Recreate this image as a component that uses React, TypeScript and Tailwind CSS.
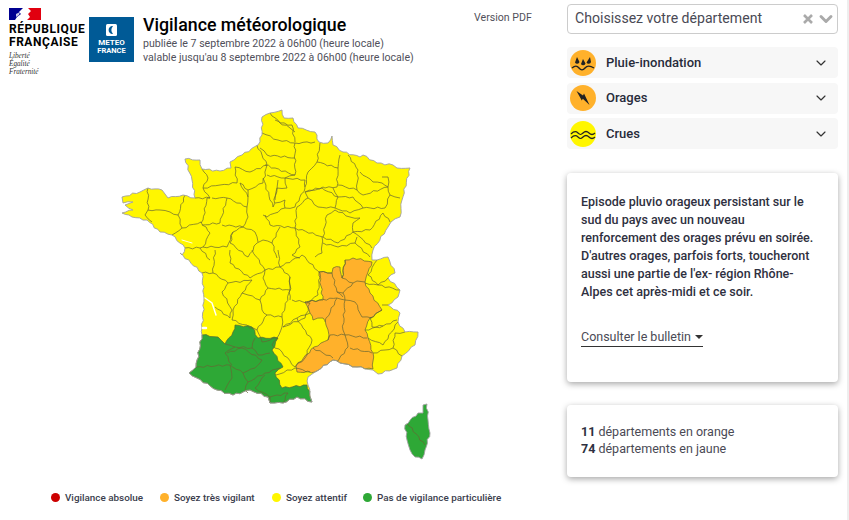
import { ChevronDown } from 'lucide-react';

const yellow = '#fff600';
const orange = '#ffb12b';
const green = '#2ea836';

// page-pixel coordinates, the svg viewBox keeps them as they are
const franceOutline =
  '185,159 200,160 202,169 220,171 231,168 230,162 242,155 258,145 262,135 262,117 270,113 282,110 284,118 293,118 298,128 315,132 319,142 328,143 332,136 333,145 343,152 360,157 363,155 377,163 393,165 397,168 410,168 402,200 400,217 391,222 388,227 373,250 372,260 377,260 388,257 395,273 388,278 400,290 398,297 388,305 400,313 398,322 405,332 418,332 415,345 402,356 397,368 378,374 373,370 357,367 340,363 333,360 315,372 308,377 308,385 312,402 297,397 283,403 270,403 268,397 250,390 233,395 217,390 197,378 189,373 196,367 202,335 202,328 204,298 202,273 180,253 182,255 185,248 172,235 160,232 147,220 132,217 122,213 133,210 125,205 133,202 123,203 122,197 140,192 148,188 162,190 168,198 183,195 195,198 192,180';

const orangeZone =
  '342,278 345,260 353,258 372,262 368,272 365,282 370,293 382,310 370,318 365,330 368,338 373,353 373,369 357,367 340,363 333,360 315,372 297,372 296,366 314,347 328,340 329,335 326,325 323,318 313,320 310,313 305,302 323,300 319,272 332,273 333,268 340,267';

const greenZone =
  '202,335 218,337 225,344 233,332 235,325 252,327 258,338 278,338 272,350 283,367 275,373 282,388 307,385 312,402 297,397 283,403 270,403 268,397 250,390 233,395 217,390 197,378 189,373 196,367';

const corsica =
  '423,405 427,404 428,420 430,433 425,450 422,459 415,457 410,450 407,440 405,425 418,413 423,413';

const borders = [
  // Bretagne, Normandie, Pays de la Loire
  '148,188 148,210 160,210 170,212 178,215 185,195',
  '148,210 145,215 152,222',
  '195,198 210,198 207,198 203,220 201,223',
  '178,215 182,228 172,235',
  '182,228 201,222 210,233 203,247 200,248 185,248',
  '200,248 210,260',
  '210,198 203,188 208,178 202,169',
  '203,188 220,185 237,183 235,167',
  '212,198 227,198 247,207 248,197 240,183',
  '227,198 220,223 202,225',
  '247,207 248,217 243,227 222,225',
  '203,247 227,247 233,232 243,227',
  '233,232 230,243 248,257 257,243 263,240',
  '243,227 255,232 258,242',
  '235,167 250,172 267,165 257,145',
  '240,183 248,190 263,183 267,165',
  '248,190 248,197',
  // Nord, Ile-de-France
  '262,133 278,140 295,143 315,142',
  '270,113 280,123 292,125 295,142',
  '275,120 290,128 295,132',
  '260,148 267,155 295,158',
  '295,143 295,175',
  '320,143 317,162 308,172 305,187',
  '265,165 295,175 285,178',
  '267,175 285,178 287,188 277,188 273,207',
  '263,178 273,207',
  '278,180 277,188 275,200',
  '285,178 305,180 305,188 295,207 285,208 285,200 275,203',
  '263,215 267,217 285,208',
  // Grand Est, Bourgogne, Franche-Comte
  '317,162 338,168 337,187 325,188 323,187 305,192',
  '340,155 338,168',
  '348,155 358,170 357,190 338,185',
  '357,190 363,195 388,187',
  '360,172 373,182 382,183 388,187',
  '382,177 388,177 388,187',
  '388,187 390,195 385,208',
  '390,195 400,198',
  '353,197 363,208 385,208',
  '333,188 338,197 335,208 350,213 363,208',
  '338,197 353,197',
  '305,192 322,188 338,197',
  '305,192 308,198 297,207',
  '308,198 318,207 335,208',
  '335,210 350,217 360,218 353,223 353,232 338,243 323,237 327,215 335,210',
  '353,232 370,230 383,213 390,222',
  '353,232 360,237 372,248',
  '297,207 295,228 323,237',
  // Centre
  '265,215 270,225 295,228',
  '280,227 272,243 277,258',
  '295,228 300,247 292,255 300,258',
  '322,237 322,253 315,257',
  '323,243 338,247 355,243 357,237',
  '355,243 370,257',
  '263,240 272,243',
  // Poitou, Limousin, Auvergne
  '215,250 213,273 202,273',
  '213,273 228,283 222,292 232,310 230,318 215,307',
  '230,250 230,263 250,278 265,270 252,250',
  '265,270 263,278 268,288 290,290 290,277 280,267 265,270',
  '278,250 280,267 302,255 320,273',
  '228,283 252,280',
  '252,280 242,293 233,310',
  '242,293 248,295 260,300 262,310 267,315 257,330 232,320 233,310',
  '268,288 260,300',
  '267,315 282,317 282,327 277,338 262,342 257,330',
  '290,290 282,317',
  '283,327 305,318 310,303 292,300',
  '290,277 290,300',
  '307,302 318,295 320,273',
  '283,327 297,318 303,328 312,340 305,358 295,367 282,352 272,345 278,338',
  '276,375 295,368 310,372',
  '297,318 310,313',
  // Sud-Ouest
  '196,367 230,365 232,378 225,390',
  '225,344 235,347 252,348 255,338',
  '235,347 225,353 232,365',
  '227,353 242,348 262,360 255,368 243,373 230,365',
  '252,348 258,355 270,353',
  '243,373 248,382 245,390 248,393',
  '248,382 265,373 280,368',
  '265,375 255,388 270,397 270,403',
  '270,397 288,393 283,403',
  // Rhone-Alpes
  '319,272 332,273 337,292 343,297',
  '342,278 353,283 343,293 337,292',
  '345,260 342,278',
  '353,283 357,281 365,282',
  '343,293 345,300 343,330 345,335',
  '345,300 355,302 362,317 372,318',
  '305,302 337,298 345,300',
  '337,298 325,322',
  '330,335 345,335 348,347 337,362',
  '345,335 367,338',
  '350,348 372,353',
  '313,348 333,358',
  '328,340 330,335',
  // Alpes, Provence
  '377,260 368,275 378,285 388,278',
  '365,283 378,285 400,290',
  '382,305 388,305',
  '382,310 370,318 372,327 383,326 397,320',
  '365,330 383,326',
  '368,338 383,345 398,322',
  '373,353 393,348 402,356',
  '395,333 405,332',
  '393,348 395,333',
  // Corse
  '407,423 425,445',
];

// breaks each straight segment into small wiggles, same offset for the same
// segment in both directions so that fills and borders stay aligned
function roughen(points: string, closed = false) {
  const pts = points.split(' ').map((p) => p.split(',').map(Number));
  if (closed) pts.push(pts[0]);
  const out: string[] = [];
  for (let i = 0; i < pts.length - 1; i++) {
    const [ax, ay] = pts[i];
    const [bx, by] = pts[i + 1];
    out.push(`${ax},${ay}`);
    const len = Math.hypot(bx - ax, by - ay);
    const steps = Math.floor(len / 3.5);
    const seed = ax + bx + (ay + by) * 7;
    const flip = ax < bx || (ax === bx && ay < by) ? 1 : -1;
    for (let s = 1; s < steps; s++) {
      const t = flip === 1 ? s / steps : 1 - s / steps;
      const k = flip === 1 ? s : steps - s;
      const off = Math.sin(seed * 1.7 + k * 2.3) * 0.9;
      const nx = -(by - ay) / len;
      const ny = (bx - ax) / len;
      const u = flip === 1 ? t : 1 - t;
      out.push(`${(ax + (bx - ax) * u + nx * off * flip).toFixed(1)},${(ay + (by - ay) * u + ny * off * flip).toFixed(1)}`);
    }
  }
  const last = pts[pts.length - 1];
  out.push(`${last[0]},${last[1]}`);
  return out.join(' ');
}

const legend = [
  { label: 'Vigilance absolue', color: 'bg-[#cc0000]', width: 'w-[109px]' },
  { label: 'Soyez très vigilant', color: 'bg-[#ffb12b]', width: 'w-[112px]' },
  { label: 'Soyez attentif', color: 'bg-[#fff600]', width: 'w-[91px]' },
  { label: 'Pas de vigilance particulière', color: 'bg-[#2ea836]', width: 'w-[140px]' },
];

function RainIcon() {
  return (
    <svg width="26" height="26" viewBox="0 0 26 26">
      <circle cx="13" cy="13" r="13" fill={orange} />
      <path d="M7 7 L9.5 12 A2.5 2.5 0 0 1 5 12.5 Z M13 9 L15.5 13.5 A2.4 2.4 0 0 1 11 14 Z M20 7 L21 12 A2.4 2.4 0 0 1 16.5 12.5 Z" fill="#222" />
      <path d="M2 18 C5 15.5 7 15.5 9 18 C11 20.5 13 20.5 15 18 C17 15.5 20 15.5 24 18" fill="none" stroke="#222" strokeWidth="1.4" />
    </svg>
  );
}

function StormIcon() {
  return (
    <svg width="26" height="26" viewBox="0 0 26 26">
      <circle cx="13" cy="13" r="13" fill={orange} />
      <path d="M6.5 6 L13 10.5 L14 8.5 L19.5 20 L12.8 13.8 L11.8 15.6 Z" fill="#222" />
    </svg>
  );
}

function FloodIcon() {
  return (
    <svg width="26" height="26" viewBox="0 0 26 26">
      <circle cx="13" cy="13" r="13" fill={yellow} />
      <path
        d="M1 13 C4 10 6 10 8 12 C10 14 11 14 13 12 C15 10 17 10 19 12 C21 14 23 14 25 12 M1 17 C4 14 6 14 8 16 C10 18 11 18 13 16 C15 14 17 14 19 16 C21 18 23 18 25 16"
        fill="none"
        stroke="#222"
        strokeWidth="1.2"
      />
    </svg>
  );
}

function Flag() {
  return (
    <svg width="32" height="12" viewBox="0 0 32 12">
      <rect width="32" height="12" fill="#fff" />
      <path d="M0 0 H14 L10 4 L12 6 L8 9 L6 12 H0 Z" fill="#000091" />
      <path d="M19 0 H32 V12 H18 L21 9 L19 6 L22 3 Z" fill="#e1000f" />
      <path d="M7 6 L11 4 L10 7 L7 9 Z" fill="#c8c8e8" />
    </svg>
  );
}

function MeteoLogo() {
  return (
    <div className="w-[45px] h-[45px] bg-[#005a96] flex flex-col items-center justify-center shrink-0">
      <svg width="11" height="12" viewBox="0 0 11 12" className="mb-[3px]">
        <rect width="11" height="12" rx="1.5" fill="#fff" />
        <path d="M7 2.2 A3.6 3.9 0 1 0 7 9.8 A5.2 5.2 0 0 1 7 2.2 Z" fill="#005a96" />
      </svg>
      <span className="text-[8px] leading-[8px] font-bold text-white">METEO</span>
      <span className="text-[7.5px] leading-[8px] font-bold text-white">FRANCE</span>
    </div>
  );
}

function RiskRow({ icon, label }: { icon: React.ReactNode; label: string }) {
  return (
    <div className="h-[31px] rounded bg-[#f7f7f7] flex items-center pl-[3px] pr-[9px]">
      {icon}
      <span className="ml-[10px] flex-1 text-[13px] font-medium text-[#272b3a]">{label}</span>
      <ChevronDown size={16} strokeWidth={1.75} className="text-[#333]" />
    </div>
  );
}

export default function App() {
  return (
    <div
      className="w-[849px] h-[520px] overflow-hidden bg-white flex border-r-2 border-[#eeeeee]"
      style={{ fontFamily: 'Roboto, sans-serif' }}
    >
      {/* Colonne carte */}
      <div className="w-[567px] shrink-0 flex flex-col">
        <header className="h-[90px] shrink-0 flex items-start pl-[9px] pt-[8px]">
          <div className="w-[80px] shrink-0 flex flex-col">
            <Flag />
            <div className="mt-[3px] text-[12px] leading-[13px] font-bold text-black tracking-[0.55px]">
              RÉPUBLIQUE
              <br />
              FRANÇAISE
            </div>
            <div
              className="mt-[3px] text-[7.2px] leading-[8px] italic text-[#333]"
              style={{ fontFamily: '"Liberation Serif", serif' }}
            >
              Liberté
              <br />
              Égalité
              <br />
              Fraternité
            </div>
          </div>
          <div className="mt-[9px]">
            <MeteoLogo />
          </div>
          <div className="ml-[9px] pt-[6px] flex-1 relative">
            <h1 className="text-[17.8px] leading-[21px] font-medium text-black">Vigilance météorologique</h1>
            <p className="mt-[2px] text-[10.6px] leading-[14px] text-[#50505a]">
              publiée le 7 septembre 2022 à 06h00 (heure locale)
            </p>
            <p className="text-[10.6px] leading-[14px] text-[#50505a]">
              valable jusqu'au 8 septembre 2022 à 06h00 (heure locale)
            </p>
            <span className="absolute left-[331px] top-[3px] text-[10.6px] leading-[14px] text-[#50505a]">
              Version PDF
            </span>
          </div>
        </header>

        <svg width="567" height="392" viewBox="0 90 567 392" className="block shrink-0">
          <g strokeLinejoin="round">
            <polygon points={roughen(franceOutline, true)} fill={yellow} />
            <polygon points={roughen(orangeZone, true)} fill={orange} stroke="#666633" strokeWidth="0.7" />
            <polygon points={roughen(greenZone, true)} fill={green} stroke="#556633" strokeWidth="0.7" />
            <polygon points={roughen(corsica, true)} fill={green} />
          </g>
          <g fill="none" stroke="#666633" strokeWidth="0.7" strokeLinejoin="round">
            {borders.map((points) => (
              <polyline key={points} points={roughen(points)} />
            ))}
          </g>
          <g fill="none" stroke="#a0a0a0" strokeWidth="0.9" strokeLinejoin="round">
            <polygon points={roughen(franceOutline, true)} />
            <polygon points={roughen(corsica, true)} />
          </g>
          {/* estuaires */}
          <g fill="none" stroke="#fff" strokeWidth="1.4" strokeLinecap="round">
            <polyline points="205,298 212,303 216,315" />
            <polyline points="182,240 192,243" strokeWidth="0.9" />
            <polyline points="203,328 206,328" strokeWidth="2.5" />
          </g>
        </svg>

        <div className="flex items-center h-[18px] mt-[7px] pl-[51px] text-[9.9px] font-medium text-[#3a3d4d]">
          {legend.map((item) => (
            <div key={item.label} className={`flex items-center shrink-0 ${item.width}`}>
              <span className={`w-[9px] h-[9px] rounded-full shrink-0 ${item.color}`} />
              <span className="ml-[5px] whitespace-nowrap">{item.label}</span>
            </div>
          ))}
        </div>
      </div>

      {/* Colonne droite */}
      <div className="w-[271px] shrink-0 flex flex-col pt-[4px]">
        <div className="h-[30px] rounded border border-[#cccccc] flex items-center pl-[7px] pr-[1px]">
          <span className="flex-1 text-[14.1px] text-[#4a4a55]">Choisissez votre département</span>
          <svg width="12" height="12" viewBox="0 0 12 12" className="text-[#aaaaaa]">
            <path d="M2 2 L10 10 M10 2 L2 10" stroke="currentColor" strokeWidth="2.6" />
          </svg>
          <ChevronDown size={20} strokeWidth={3.5} className="ml-[2px] text-[#aaaaaa]" />
        </div>

        <div className="mt-[13px] flex flex-col gap-[4.5px]">
          <RiskRow icon={<RainIcon />} label="Pluie-inondation" />
          <RiskRow icon={<StormIcon />} label="Orages" />
          <RiskRow icon={<FloodIcon />} label="Crues" />
        </div>

        <div className="mt-[24px] h-[209px] rounded bg-white pl-[14px] pr-[20px] pt-[20px] shadow-[0_2px_6px_rgba(0,0,0,0.35)]">
          <p className="text-[12.5px] leading-[17.9px] font-medium text-[#2e3040]">
            Episode pluvio orageux persistant sur le sud du pays avec un nouveau renforcement des orages prévu en soirée.
            D'autres orages, parfois forts, toucheront aussi une partie de l'ex- région Rhône-Alpes cet après-midi et ce soir.
          </p>
          <div className="mt-[27px] w-[122px] h-[20px] border-b border-[#333] flex items-center justify-between text-[12.5px] text-[#4a4a55]">
            <span>Consulter le bulletin</span>
            <span className="w-0 h-0 border-x-[4px] border-x-transparent border-t-[4px] border-t-[#333]" />
          </div>
        </div>

        <div className="mt-[23px] h-[72px] rounded bg-white px-[14px] pt-[18px] shadow-[0_2px_6px_rgba(0,0,0,0.35)] text-[12.5px] leading-[17px] text-[#4a4a55]">
          <p>
            <b className="font-bold text-[#2e3040]">11</b> départements en orange
          </p>
          <p>
            <b className="font-bold text-[#2e3040]">74</b> départements en jaune
          </p>
        </div>
      </div>
    </div>
  );
}
